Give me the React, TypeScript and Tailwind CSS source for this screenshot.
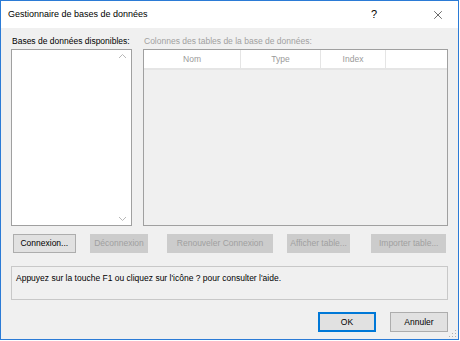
import { X } from 'lucide-react';

const font = { fontFamily: '"Liberation Sans", Arial, sans-serif' };

function Btn({ label, disabled, className }: { label: string; disabled?: boolean; className: string }) {
  return (
    <div
      className={`h-[19px] flex items-center justify-center border whitespace-nowrap text-[8.5px] ${
        disabled ? 'border-[#cccccc] bg-[#cccccc] text-[#a0a0a0]' : 'border-[#adadad] bg-[#e1e1e1] text-black'
      } ${className}`}
    >
      {label}
    </div>
  );
}

export default function App() {
  return (
    <div className="w-[460px] h-[341px] bg-white" style={font}>
      <div className="relative w-[459px] h-[340px] border border-[#2b7bd6] bg-[#f0f0f0] flex flex-col">
        {/* Title bar */}
        <div className="h-[27px] bg-white flex items-center pl-[7px] text-[9px] text-black whitespace-nowrap">
          <span>Gestionnaire de bases de données</span>
          <span className="ml-auto mr-[54px] text-[11px]">?</span>
          <X className="mr-[13px] w-[14px] h-[14px]" strokeWidth={1} />
        </div>

        <div className="flex flex-col px-[10px] pt-[5px]">
          {/* labels */}
          <div className="flex text-[8.5px] h-[16px] items-center whitespace-nowrap">
            <span className="w-[133px] pl-[1px] text-black">Bases de données disponibles:</span>
            <span className="text-[#a0a0a0]">Colonnes des tables de la base de données:</span>
          </div>

          <div className="flex h-[177px]">
            {/* list */}
            <div className="w-[121px] h-full border border-[#a0a0a0] bg-white flex">
              <div className="flex-1" />
              <div className="w-[17px] flex flex-col items-center justify-between py-[3px]">
                <svg width="9" height="6" viewBox="0 0 9 6"><path d="M1 5 L4.5 1.5 L8 5" fill="none" stroke="#b8b8b8" strokeWidth="1" /></svg>
                <svg width="9" height="6" viewBox="0 0 9 6"><path d="M1 1 L4.5 4.5 L8 1" fill="none" stroke="#b8b8b8" strokeWidth="1" /></svg>
              </div>
            </div>

            {/* table */}
            <div className="ml-[11px] w-[305px] h-full border border-[#a0a0a0] bg-[#f0f0f0]">
              <div className="h-[20px] flex bg-white border-b-2 border-[#e5e5e5] text-[8.5px] text-[#9a9a9a]">
                <div className="w-[97px] flex items-center justify-center border-r border-[#e5e5e5]">Nom</div>
                <div className="w-[80px] flex items-center justify-center border-r border-[#e5e5e5]">Type</div>
                <div className="w-[65px] flex items-center justify-center border-r border-[#e5e5e5]">Index</div>
                <div className="flex-1" />
              </div>
            </div>
          </div>

          {/* buttons */}
          <div className="flex mt-[8px] px-[2px]">
            <Btn label="Connexion..." className="w-[63px]" />
            <Btn label="Déconnexion" disabled className="ml-[14px] w-[59px]" />
            <Btn label="Renouveler Connexion" disabled className="ml-[19px] w-[106px]" />
            <Btn label="Afficher table..." disabled className="ml-[14px] w-[64px]" />
            <Btn label="Importer table..." disabled className="ml-[21px] w-[75px]" />
          </div>

          {/* help */}
          <div className="mt-[13px] h-[34px] border border-[#c8c8c8] pl-[4px] pt-[5px] text-[8.5px] text-black whitespace-nowrap">
            Appuyez sur la touche F1 ou cliquez sur l'icône ? pour consulter l'aide.
          </div>

          {/* ok/cancel */}
          <div className="flex justify-end mt-[12px]">
            <div className="w-[58px] h-[20px] flex items-center justify-center border-2 border-[#0078d7] bg-[#e1e1e1] text-[8.5px]">OK</div>
            <div className="ml-[14px] w-[58px] h-[20px] flex items-center justify-center border border-[#adadad] bg-[#e1e1e1] text-[8.5px]">Annuler</div>
          </div>
        </div>

        {/* resize grip */}
        <svg className="absolute right-[1px] bottom-[1px]" width="8" height="8" viewBox="0 0 8 8">
          <rect x="6" y="0" width="1" height="1" fill="#b0b0b0" />
          <rect x="3" y="3" width="1" height="1" fill="#b0b0b0" />
          <rect x="6" y="3" width="1" height="1" fill="#b0b0b0" />
          <rect x="0" y="6" width="1" height="1" fill="#b0b0b0" />
          <rect x="3" y="6" width="1" height="1" fill="#b0b0b0" />
          <rect x="6" y="6" width="1" height="1" fill="#b0b0b0" />
        </svg>
      </div>
    </div>
  );
}
